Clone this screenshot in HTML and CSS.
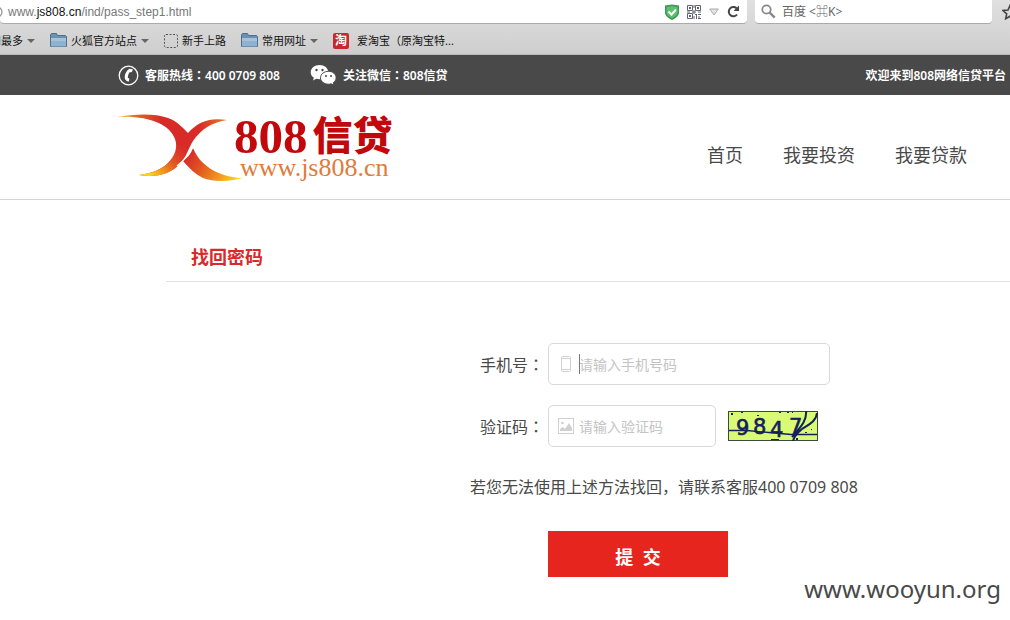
FILE: index.html
```html
<!DOCTYPE html>
<html lang="zh-CN">
<head>
  <meta charset="UTF-8" />
  <meta name="viewport" content="width=device-width, initial-scale=1.0" />
  <title>找回密码</title>
  <link rel="stylesheet" href="styles.css">
</head>
<body>

  <!-- 浏览器工具栏 -->
  <div class="browser">
    <div class="toolbar">
      <div class="address">
        <svg class="globe" width="8" height="16" viewBox="0 0 8 16"><circle cx="-3" cy="8" r="5" fill="none" stroke="#999" stroke-width="1.3"/></svg>
        <span class="url">www.<b>js808.cn</b>/ind/pass_step1.html</span>
        <svg width="14" height="16" viewBox="0 0 14 16"><path d="M0 1.5L7 .5l7 1v7c0 3-3 5.500-7 7.500-4-2-7-4.500-7-7.500z" fill="#3a9a50"/><path d="M1.500 3L7 2l5.500 1v5.500c0 2-2 4-5.500 5.700-3.500-1.700-5.500-3.700-5.500-5.700z" fill="#5bc070"/><path d="M3.500 7.500l3 3 4.500-5" fill="none" stroke="#fff" stroke-width="2"/></svg>
        <svg width="14" height="14" viewBox="0 0 14 14" fill="none" stroke="#5e6570">
          <path d="M.5.5h5v5h-5zM8.500.5h5v5h-5zM.5 8.500h5v5h-5z"/>
          <path d="M2 3h2M10 3h2M2 11h2" stroke-width="2"/>
          <path d="M7 0v3M7 5v4M0 7h3M5 7h4M11 7h3M8 9.500h2M11 9.500h3M9.500 10v4M7 11v3M12 11v2M11 13.500h3"/>
        </svg>
        <svg width="10" height="8" viewBox="0 0 10 8"><path d="M.7 1h8.600L5 7z" fill="#e4e4e4" stroke="#aaa"/></svg>
        <svg class="reload" width="13" height="13" viewBox="0 0 13 13"><path d="M10 9.500A4.600 4.600 0 1 1 9.500 3.300" fill="none" stroke="#444" stroke-width="2"/><path d="M12 .5V6H6.500z" fill="#444"/></svg>
      </div>
      <div class="search">
        <svg width="15" height="15" viewBox="0 0 15 15" fill="none" stroke="#888"><circle cx="5.500" cy="5.500" r="4.200" stroke-width="1.800"/><path d="M8.700 8.700l5 5" stroke-width="2.400"/></svg>
        <span>百度 &lt;⌘K&gt;</span>
      </div>
      <svg class="star" width="16" height="16" viewBox="0 0 16 16"><path d="M8 1.500l2 4.500 5 .5-3.700 3.300 1 4.900L8 12.200l-4.300 2.500 1-4.900L1 6.500 6 6z" fill="none" stroke="#444" stroke-width="1.600"/></svg>
    </div>

    <div class="bookmarks">
      <a class="bookmark" href="#">访问最多<span class="arrow"></span></a>
      <a class="bookmark" href="#">
        <svg width="17" height="15" viewBox="0 0 17 15"><path d="M.5 13.500v-12l1-1h5l1 2h8l1 1v10z" fill="#6c91b0" stroke="#4f6f8b"/><path d="M1 5h15v8.500H1z" fill="#8fb3cf"/><path d="M1 5h15v3H1z" fill="#a4c3da"/></svg>
        火狐官方站点<span class="arrow"></span>
      </a>
      <a class="bookmark" href="#">
        <svg width="14" height="14" viewBox="0 0 14 14"><rect x=".5" y=".5" width="13" height="13" rx="1.500" fill="none" stroke="#555" stroke-dasharray="2 1.500"/></svg>
        新手上路
      </a>
      <a class="bookmark" href="#">
        <svg width="17" height="15" viewBox="0 0 17 15"><path d="M.5 13.500v-12l1-1h5l1 2h8l1 1v10z" fill="#6c91b0" stroke="#4f6f8b"/><path d="M1 5h15v8.500H1z" fill="#8fb3cf"/><path d="M1 5h15v3H1z" fill="#a4c3da"/></svg>
        常用网址<span class="arrow"></span>
      </a>
      <a class="bookmark" href="#"><span class="taobao">淘</span>爱淘宝（原淘宝特...</a>
    </div>
  </div>

  <!-- 顶部信息 -->
  <div class="topbar">
    <div class="contact">
      <svg width="21" height="21" viewBox="0 0 21 21"><circle cx="10.500" cy="10.500" r="9.300" fill="none" stroke="#fff" stroke-width="1.300"/><path d="M11.300 3.800l3 .5c.6.1.7.5.4.9l-1 1.700c-.2.400-.6.4-1 .3l-.9-.1c-1.200 1.500-2 3.500-1.900 5.800l1 .4c.4.2.5.5.4.9l-.4 1.900c-.1.500-.5.7-1 .5-2.200-.8-3.500-2.400-3.200-5 .3-3 2-6.200 4.600-7.800z" fill="#fff"/></svg>
      <span>客服热线<span class="punct" lang="zh-TW">：</span>400 0709 808</span>
    </div>
    <div class="contact">
      <svg width="27" height="22" viewBox="0 0 27 22">
        <path d="M9.500 1C4.500 1 .7 4.200.7 8.200c0 2.300 1.200 4.200 3.200 5.500L3 16.500l3.300-1.700c1 .3 2.100.5 3.200.5 5 0 8.800-3.200 8.800-7.100C18.300 4.200 14.500 1 9.500 1z" fill="#fff"/>
        <path d="M18.500 7.300c-4.500 0-8 2.900-8 6.500s3.500 6.400 8 6.400c.9 0 1.800-.1 2.600-.4l2.900 1.500-.8-2.500c1.800-1.200 2.900-3 2.900-5 0-3.600-3.300-6.500-7.600-6.500z" fill="#fff" stroke="#494949"/>
        <g fill="#494949"><circle cx="6.500" cy="6" r="1.200"/><circle cx="12.500" cy="6" r="1.200"/><circle cx="16" cy="12" r="1"/><circle cx="21" cy="12" r="1"/></g>
      </svg>
      <span>关注微信<span class="punct" lang="zh-TW">：</span>808信贷</span>
    </div>
    <span class="welcome">欢迎来到808网络信贷平台</span>
  </div>

  <div class="header">
    <a class="logo" href="#">
      <svg width="126" height="70" viewBox="0 0 126 70">
        <defs>
          <linearGradient id="left" gradientUnits="userSpaceOnUse" x1="0" y1="0" x2="110" y2="0">
            <stop offset="0" stop-color="#f0c020"/>
            <stop offset=".2" stop-color="#e0602a"/>
            <stop offset=".4" stop-color="#d62b28"/>
            <stop offset=".75" stop-color="#d92b28"/>
            <stop offset="1" stop-color="#ec7a20"/>
          </linearGradient>
          <linearGradient id="fade" gradientUnits="userSpaceOnUse" x1="66" y1="32" x2="34" y2="66">
            <stop offset="0" stop-color="#e23c20" stop-opacity="0"/>
            <stop offset=".6" stop-color="#ea7a1e"/>
            <stop offset="1" stop-color="#fbdc18"/>
          </linearGradient>
          <linearGradient id="right" gradientUnits="userSpaceOnUse" x1="74" y1="37" x2="122" y2="66">
            <stop offset="0" stop-color="#d62b28"/>
            <stop offset=".35" stop-color="#e35a20"/>
            <stop offset=".65" stop-color="#f0921c"/>
            <stop offset="1" stop-color="#f8dc1c"/>
          </linearGradient>
        </defs>
        <path d="M0 5C16 2 38 1 51 6c9 3 14 9 20 15 9-10 20-16 39-13-14 2-26 9-34 21-5 8-7 17-13 23-10 10-24 14-41 11 13-2 22-5 29-12 7-7 10-15 7-24C53 12 30 3 0 5z" fill="url(#left)"/>
        <path d="M76 29c-5 8-7 17-13 23-10 10-24 14-41 11 13-2 22-5 29-12 5-5 8-11 8-18 5 2 11 0 17-4z" fill="url(#fade)"/>
        <path d="M76 36c6 15 22 29 50 30-14 4-30 4-40 0-8-4-14-10-20-17 4-3 8-7 10-13z" fill="url(#right)"/>
        <path d="M79 28C74 40 68 48 60 54" fill="none" stroke="#fff" stroke-width="1.500"/>
      </svg>
      <span class="logo-text">
        <span class="logo-name"><span class="logo-number">808</span>信贷</span>
        <span class="logo-url">www.js808.cn</span>
      </span>
    </a>
    <nav class="nav">
      <a href="#">首页</a>
      <a href="#">我要投资</a>
      <a href="#">我要贷款</a>
    </nav>
  </div>

  <h1 class="title">找回密码</h1>

  <form class="form">
    <div class="row">
      <label for="phone">手机号<span class="punct" lang="zh-TW">：</span></label>
      <div class="field">
        <svg width="18" height="16" viewBox="0 0 18 16" fill="none" stroke="#d0d0d0"><rect x="4.500" y=".5" width="9" height="15" rx="1"/><path d="M5 2.500h8M5 13.500h8"/></svg>
        <span class="caret"></span>
        <input type="text" id="phone" placeholder="请输入手机号码" autocomplete="off" />
      </div>
    </div>
    <div class="row">
      <label for="code">验证码<span class="punct" lang="zh-TW">：</span></label>
      <div class="field field-short">
        <svg width="18" height="16" viewBox="0 0 18 16"><rect x="1.500" y=".5" width="15" height="15" fill="none" stroke="#d0d0d0"/><path d="M3 13V11l3-2 2 2 4-6 3 5v3z" fill="#d0d0d0"/><circle cx="5.500" cy="5" r="1.300" fill="#d0d0d0"/></svg>
        <input type="text" id="code" placeholder="请输入验证码" autocomplete="off" />
      </div>
      <svg class="captcha" width="90" height="30" viewBox="0 0 90 30">
        <rect x=".5" y=".5" width="89" height="29" fill="#d9fb74" stroke="#3c4a3c"/>
        <g class="captcha-text">
          <text x="8" y="24">9</text>
          <text x="25" y="23">8</text>
          <text x="42" y="26">4</text>
          <text x="61" y="23">7</text>
        </g>
        <g fill="none" stroke="#14205a">
          <path d="M1 19.500h18l22 2 22 2h26" stroke-width="1.300"/>
          <path d="M78 0c1 8-3 14-14 26M89 2c-1 9-9 12-15 16-6 5-8 8-9 12" stroke-width="2"/>
        </g>
        <path d="M3 2h2v2H3zM13 1h2v1h-2zM29 4h2v1h-2zM51 1h2v1h-2zM59 1h2v1h-2zM64 1h1v1h-1zM77 21h2v1h-2zM83 18h1v1h-1zM43 28h8v1h-8zM68 27h2v2h-2z" fill="#14205a"/>
      </svg>
    </div>
    <p class="note">若您无法使用上述方法找回，请联系客服400 0709 808</p>
    <button class="submit" type="button">提&nbsp; 交</button>
  </form>

  <div class="watermark">www.wooyun.org</div>

</body>
</html>
```
FILE: styles.css
```css
* {
  box-sizing: border-box;
}
body {
  margin: 0;
  background: #fff;
  color: #494949;
  font-family: "Noto Sans", "Noto Sans CJK SC", sans-serif;
  font-size: 16px;
  overflow-x: hidden;
}
a {
  color: inherit;
  text-decoration: none;
}
svg {
  display: block;
  flex: none;
}
.punct {
  font-family: "Noto Sans CJK TC", sans-serif;
}

/* browser */
.browser {
  background: linear-gradient(#e0e0e0, #cecece);
  border-bottom: 1px solid #b8b8b8;
  overflow: hidden;
}
.toolbar {
  display: flex;
  gap: 8px;
  height: 24px;
  font-size: 12px;
  line-height: 24px;
}
.address, .search {
  display: flex;
  align-items: center;
  background: #fff;
  border-bottom: 1px solid #aaa;
  border-radius: 0 0 4px 4px;
}
.address {
  flex: 1;
  gap: 8px;
  padding-right: 7px;
  color: #777;
  font-family: "Liberation Sans", sans-serif;
}
.address b {
  color: #111;
  font-weight: normal;
}
.globe {
  margin-right: -8px;
}
.url {
  flex: 1;
}
.search {
  width: 237px;
  gap: 6px;
  padding-left: 6px;
  color: #666;
}
.star {
  align-self: center;
  margin: 0 -8px 0 2px;
}
.bookmarks {
  display: flex;
  align-items: center;
  gap: 15px;
  height: 30px;
  margin-left: -21px;
  padding-top: 3px;
  color: #111;
  font-size: 11px;
  line-height: 16px;
  white-space: nowrap;
}
.bookmark {
  display: flex;
  align-items: center;
  gap: 4px;
}
.arrow {
  border: 4px solid transparent;
  border-top-color: #666;
  border-bottom: 0;
}
.taobao {
  width: 16px;
  margin-right: 4px;
  background: #c9272f;
  border-radius: 2px;
  color: #fff;
  font-size: 12px;
  font-weight: bold;
  text-align: center;
}

/* top bar */
.topbar {
  display: flex;
  align-items: center;
  gap: 30px;
  height: 40px;
  padding: 0 4px 0 118px;
  background: #494949;
  color: #fff;
  font-size: 12px;
  font-weight: 600;
  white-space: nowrap;
}
.contact {
  display: flex;
  align-items: center;
  gap: 6px;
}
.welcome {
  margin-left: auto;
}

/* header */
.header {
  display: flex;
  align-items: center;
  justify-content: space-between;
  height: 105px;
  padding: 0 43px 0 117px;
  border-bottom: 1px solid #d5d5d5;
}
.logo {
  display: flex;
  align-items: center;
}
.logo > svg {
  margin-right: -9px;
}
.logo-text {
  display: flex;
  flex-direction: column;
}
.logo-name {
  display: flex;
  align-items: flex-start;
  gap: 5px;
  height: 41px;
  color: #c3080c;
  font-family: "Noto Sans CJK SC", sans-serif;
  font-size: 40px;
  font-weight: 900;
  line-height: 40px;
}
.logo-number {
  font-family: "Liberation Serif", serif;
  font-size: 49px;
  font-weight: bold;
  line-height: 47px;
}
.logo-url {
  padding-left: 6px;
  color: #e07b3c;
  font-family: "Liberation Serif", serif;
  font-size: 26px;
  line-height: 28px;
}
.nav {
  display: flex;
  gap: 40px;
  padding-top: 15px;
  font-size: 18px;
  line-height: 24px;
}

/* form */
.title {
  margin: 44px 0 0 166px;
  padding: 0 0 10px 25px;
  border-bottom: 1px solid #e3e3e3;
  color: #d8292b;
  font-size: 18px;
  line-height: 27px;
}
.form {
  margin: 61px 0 0 470px;
}
.row {
  display: flex;
  align-items: center;
  margin-bottom: 20px;
}
.row label {
  width: 78px;
  padding-right: 4px;
  line-height: 24px;
  text-align: right;
}
.field {
  position: relative;
  display: flex;
  align-items: center;
  gap: 4px;
  width: 282px;
  height: 42px;
  padding: 0 8px;
  border: 1px solid #d9d9d9;
  border-radius: 5px;
}
.field-short {
  width: 168px;
}
.field input {
  flex: 1;
  min-width: 0;
  padding: 0;
  border: 0;
  outline: 0;
  color: #494949;
  font-family: inherit;
  font-size: 14px;
}
.field input::placeholder {
  color: #c4c4c4;
}
.caret {
  position: absolute;
  left: 30px;
  width: 1px;
  height: 20px;
  background: #777;
}
.captcha {
  margin-left: 12px;
}
.captcha-text {
  fill: #14205a;
  stroke: #14205a;
  stroke-width: .6;
  font-family: "DejaVu Sans", sans-serif;
  font-size: 21px;
}
.note {
  margin: 28px 0 32px;
  line-height: 24px;
}
.submit {
  display: block;
  width: 180px;
  height: 46px;
  margin-left: 78px;
  padding: 4px 0 0;
  border: 0;
  background: #e6251f;
  color: #fff;
  font-family: inherit;
  font-size: 18px;
  font-weight: bold;
}
.watermark {
  padding: 0 9px 12px 0;
  font-family: "Noto Sans", sans-serif;
  font-size: 24px;
  line-height: 24px;
  text-align: right;
}
```
